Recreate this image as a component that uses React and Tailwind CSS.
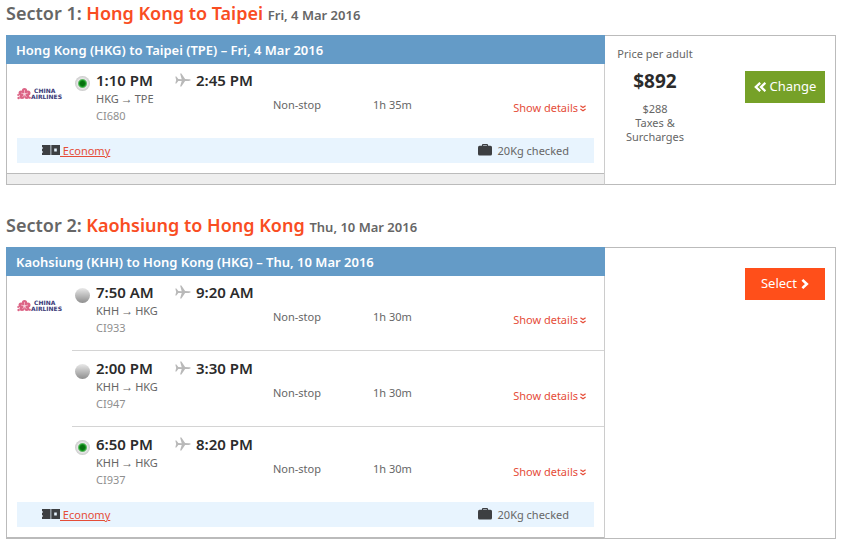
import React from "react";

const CHECKED =
  "checked:bg-[radial-gradient(circle_at_50%_50%,#06700e_0_2px,#12951c_3px,#5fb765_4px,#e6e6e6_5px,#c4c4c4_8px)]";

function Plane() {
  return (
    <svg viewBox="0 -1 16 16" className="size-4 shrink-0" fill="#b9b9b9" aria-hidden="true">
      <path d="M.3 3.600h1.100L3.300 6.100l3.400.1L5.100.600h1.300l3.700 5.500 3.700.2c1 .1 2 .4 2 .8s-1 .700-2 .800l-3.700.2-3.700 5.500H5.100l1.600-5.600-3.400.1-1.900 2.500H.3l.9-3.500z" />
    </svg>
  );
}

function Logo() {
  return (
    <svg viewBox="0 0 46 14" className="h-3.5 w-[46px]" role="img" aria-label="China Airlines">
      <g fill="#dc6486">
        <circle cx="7.500" cy="3.500" r="2.600" />
        <circle cx="4" cy="6" r="2.500" />
        <circle cx="11" cy="6" r="2.500" />
        <circle cx="5" cy="9.500" r="2.500" />
        <circle cx="9.800" cy="9.500" r="2.500" />
        <circle cx="1.200" cy="8" r="1" />
        <circle cx="1.600" cy="11" r="1.200" />
        <circle cx="12.800" cy="10.800" r="1.100" />
      </g>
      <path d="M7.500 7V3M7.500 7 4 6M7.500 7l3.500-1M7.500 7l-2 3M7.500 7l2 3" stroke="#f7c9d6" strokeWidth=".7" />
      <g fill="#3b3a78" fontFamily="DejaVu Sans, sans-serif" fontWeight="700" fontSize="6">
        <text x="17" y="6">CHINA</text>
        <text x="14" y="12">AIRLINES</text>
      </g>
    </svg>
  );
}

function Ticket() {
  return (
    <svg viewBox="0 0 18 10" className="h-2.5 w-[18px] shrink-0" aria-hidden="true">
      <path fill="#3d3f42" d="M0 0h8.500v10H0V8l1.200-1L0 6V4l1.200-1L0 2zM9.300 0H18v10H9.300z" />
      <path fill="#e8f4fe" d="M12.200 3.500h2.600v3h-2.600z" />
    </svg>
  );
}

function Suitcase() {
  return (
    <svg viewBox="0 0 14 12" className="h-3 w-3.5 shrink-0" aria-hidden="true">
      <path d="M4.500 2.500V1.200q0-.6.600-.6h3.800q.6 0 .6.600v1.300" fill="none" stroke="#3d3f42" strokeWidth="1.200" />
      <rect y="1.800" width="14" height="9.700" rx="1.500" fill="#3d3f42" />
    </svg>
  );
}

function DoubleDown() {
  return (
    <svg viewBox="0 0 6 7" className="h-[7px] w-1.5" fill="none" stroke="currentColor" strokeWidth="1.200" aria-hidden="true">
      <path d="M.4.800 3 2.600 5.600.800M.4 3.900 3 5.700l2.600-1.800" />
    </svg>
  );
}

function Flight({ group, flight, first, selected }) {
  const id = `${group}-${flight.code}`;
  return (
    <li className={`flex pb-3.5 ${first ? "pt-2" : "border-t border-[#d4d4d4] pt-[9px]"}`}>
      <input
        type="radio"
        id={id}
        name={group}
        defaultChecked={selected}
        className={`mt-1 ml-[3px] size-[15px] shrink-0 appearance-none rounded-full bg-linear-to-b from-[#e9e9e9] to-[#8f8f8f] ${CHECKED}`}
      />
      <label htmlFor={id} className="ml-1.5 h-[52px] w-[177px] shrink-0">
        <span className="flex h-[18px] items-start text-[15px] leading-4 font-semibold text-[#2b2b2b]">
          <span className="w-[79px]">{flight.departs}</span>
          <Plane />
          <span className="ml-[5px]">{flight.arrives}</span>
        </span>
        <span className="block h-[17px] leading-[18px]">
          {flight.from}
          <span className="px-0.5 font-['Liberation_Sans',sans-serif] text-xs leading-none">→</span>
          {flight.to}
        </span>
        <span className="block h-[17px] leading-[18px] text-[#8f8f8f]">{flight.code}</span>
      </label>
      <span className="mt-6 w-[100px] shrink-0 leading-[18px]">Non-stop</span>
      <span className="mt-6 grow leading-[18px]">{flight.duration}</span>
      <a href="#details" className="mt-[27px] mr-[18px] flex h-[18px] items-center gap-0.5 text-[#e54d38]">
        Show details
        <DoubleDown />
      </a>
    </li>
  );
}

function Sector({ number, route, date, title, group, flights, selected, footer, children }) {
  return (
    <section>
      <h2 className="mb-[9px] h-[26px] text-[18px] leading-[26px] font-semibold text-[#666]">
        Sector {number}: <span className="text-[#f94d22]">{route}</span>{" "}
        <small className="text-[13px]">{date}</small>
      </h2>
      <div className="flex">
        <div className="flex min-w-0 grow flex-col">
          <h3 className="h-[29px] bg-[#649bc7] px-2.5 text-[13px] leading-[30px] font-semibold text-white">{title}</h3>
          <div className={`grow border-x border-r-[#ccc] border-l-[#bbb] border-b-[#bbb] ${footer ? "border-b" : "border-b-2"}`}>
            <div className="flex">
              <div className="w-[65px] shrink-0 pt-[23px] pl-2.5">
                <Logo />
              </div>
              <ul className="grow">
                {flights.map((f, i) => (
                  <Flight key={f.code} group={group} flight={f} first={i === 0} selected={f.code === selected} />
                ))}
              </ul>
            </div>
            <div className="mx-2.5 mb-2.5 flex h-[25px] items-start justify-between bg-[#e8f4fe] px-[25px] leading-[26px]">
              <a href="#fare" className="flex text-[#e54d38] underline">
                <span className="pt-[7px]">
                  <Ticket />
                </span>
                <span>&nbsp;Economy</span>
              </a>
              <span className="flex gap-1.5">
                <span className="pt-1.5">
                  <Suitcase />
                </span>
                20Kg checked
              </span>
            </div>
            {footer && <div className="h-[11px] border-t border-[#bbb] bg-[#eee]" />}
          </div>
        </div>
        <div className="flex w-[231px] shrink-0 items-start justify-between border-y border-r border-[#bbb] pr-2.5">
          {children}
        </div>
      </div>
    </section>
  );
}

const hkgTpe = [
  { departs: "1:10 PM", arrives: "2:45 PM", from: "HKG", to: "TPE", code: "CI680", duration: "1h 35m" },
];
const khhHkg = [
  { departs: "7:50 AM", arrives: "9:20 AM", from: "KHH", to: "HKG", code: "CI933", duration: "1h 30m" },
  { departs: "2:00 PM", arrives: "3:30 PM", from: "KHH", to: "HKG", code: "CI947", duration: "1h 30m" },
  { departs: "6:50 PM", arrives: "8:20 PM", from: "KHH", to: "HKG", code: "CI937", duration: "1h 30m" },
];

export default function App() {
  return (
    <main className="flex flex-col gap-[27px] bg-white px-1.5 font-['Noto_Sans',sans-serif] text-[11px] text-[#666]">
      <Sector
        number={1}
        route="Hong Kong to Taipei"
        date="Fri, 4 Mar 2016"
        title="Hong Kong (HKG) to Taipei (TPE) – Fri, 4 Mar 2016"
        group="outbound"
        flights={hkgTpe}
        selected="CI680"
        footer
      >
        <div className="w-[100px] pt-2.5 text-center leading-[14px]">
          <p className="leading-4">Price per adult</p>
          <p className="mt-[5px] mb-[7px] text-[19px] leading-7 font-bold text-[#2b2b2b]">$892</p>
          <p>$288</p>
          <p>
            Taxes &amp;
            <br />
            Surcharges
          </p>
        </div>
        <button className="mt-[35px] flex h-8 w-20 items-center justify-center gap-1 bg-[#76a128] text-[13px] text-white">
          <svg viewBox="0 0 12 10" className="h-2.5 w-3" fill="none" stroke="currentColor" strokeWidth="2.300" aria-hidden="true">
            <path d="M6.200.800 1.800 5 6.200 9.200M11.400.800 7 5l4.400 4.200" />
          </svg>
          Change
        </button>
      </Sector>
      <Sector
        number={2}
        route="Kaohsiung to Hong Kong"
        date="Thu, 10 Mar 2016"
        title="Kaohsiung (KHH) to Hong Kong (HKG) – Thu, 10 Mar 2016"
        group="inbound"
        flights={khhHkg}
        selected="CI937"
      >
        <button className="mt-5 ml-auto flex h-8 w-20 items-center justify-center gap-1 bg-[#ff4f1a] text-[13px] text-white">
          Select
          <svg viewBox="0 0 8 10" className="h-2.5 w-2" fill="none" stroke="currentColor" strokeWidth="2.600" aria-hidden="true">
            <path d="M1.400.900 5.800 5 1.400 9.100" />
          </svg>
        </button>
      </Sector>
    </main>
  );
}
